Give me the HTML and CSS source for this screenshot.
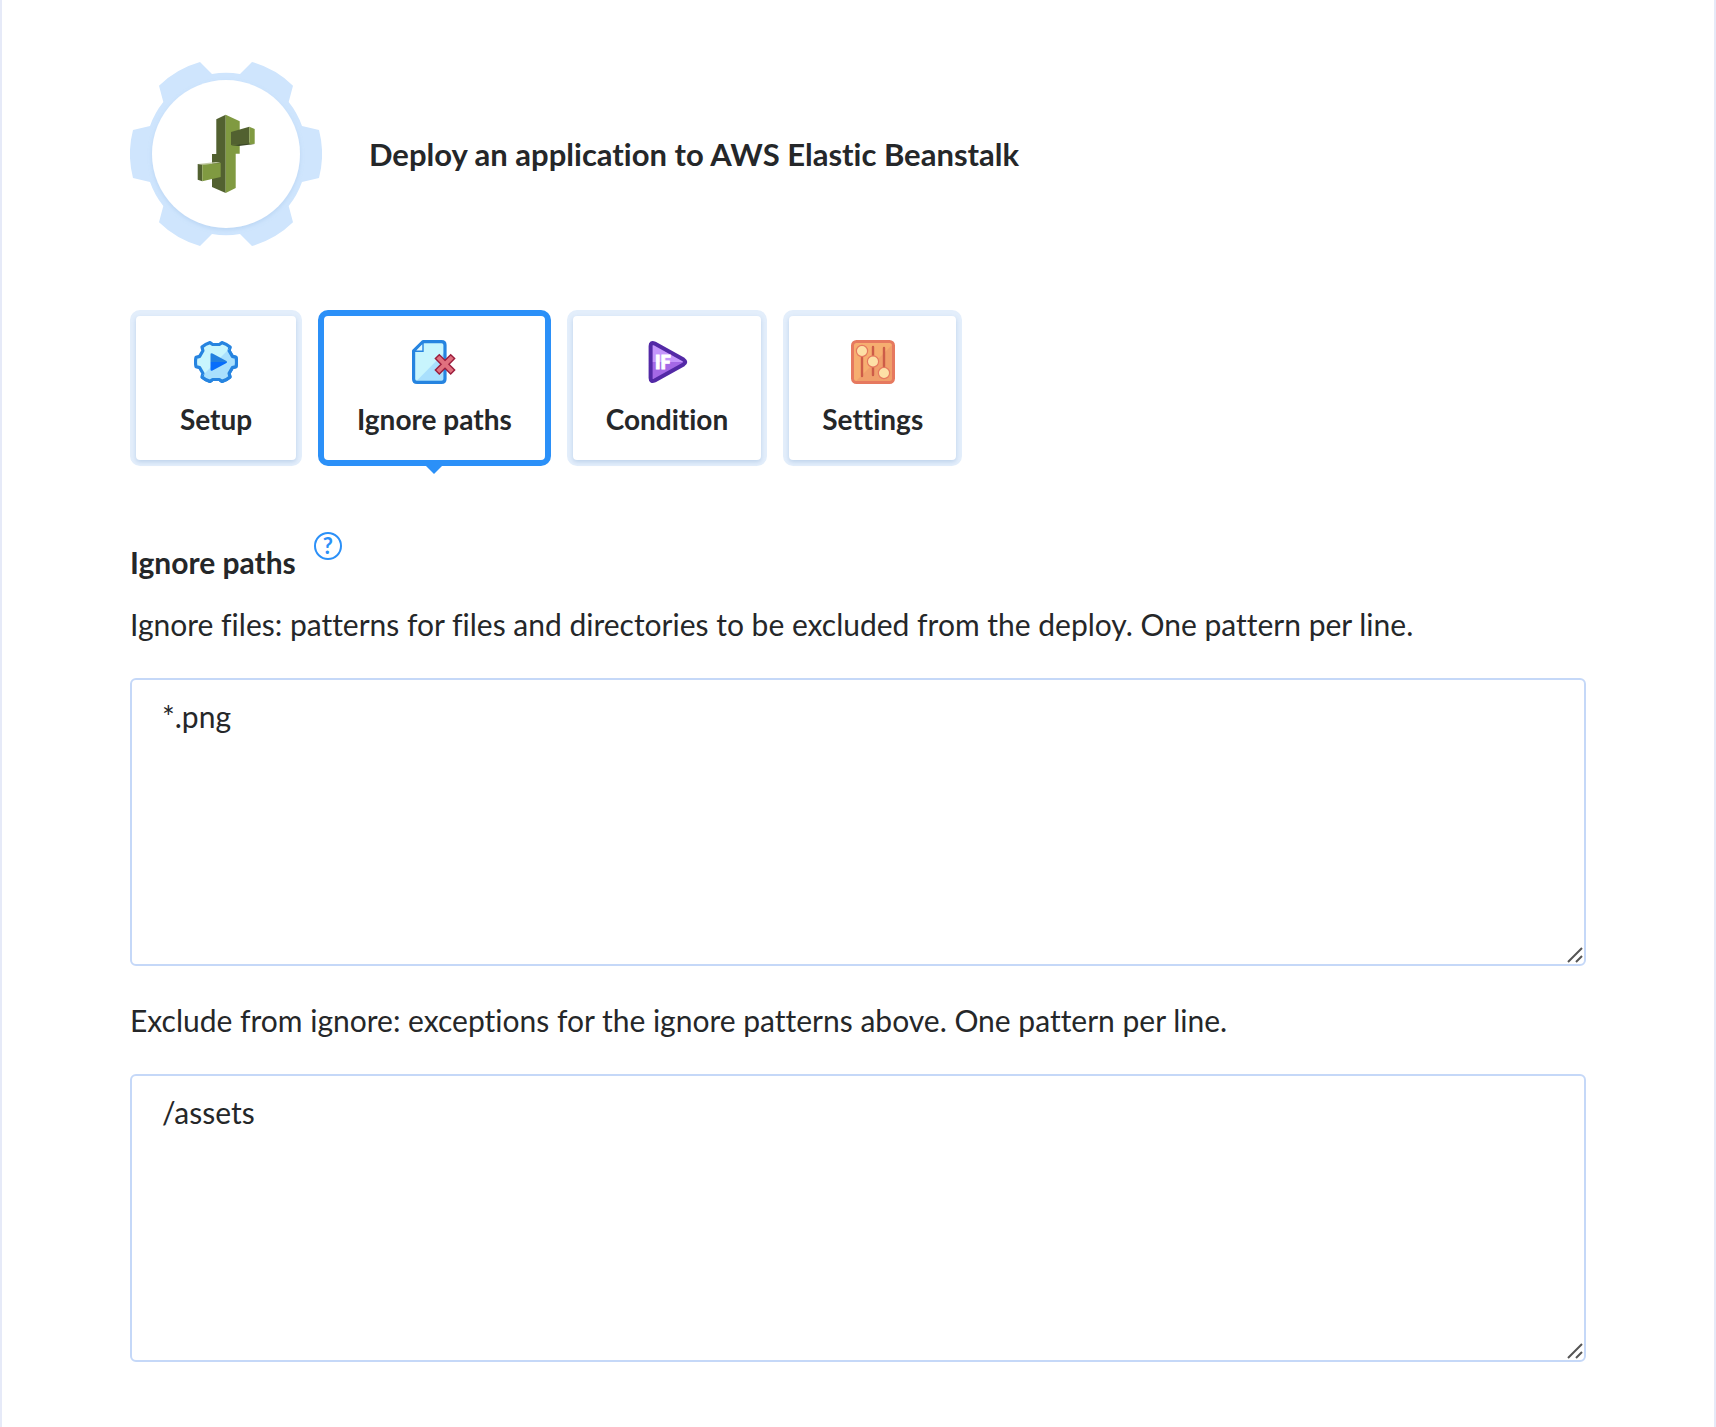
FILE: index.html
```html
<!DOCTYPE html>
<html lang="en">
<head>
<meta charset="utf-8">
<meta name="viewport" content="width=device-width, initial-scale=1">
<title>Deploy an application to AWS Elastic Beanstalk</title>
<link rel="stylesheet" href="styles.css">
</head>
<body>
<main class="panel">
  <header class="header">
    <svg class="header-icon" viewBox="0 0 192 184" aria-hidden="true">
      <defs>
        <filter id="disc-shadow" x="-10%" y="-10%" width="120%" height="120%">
          <feDropShadow dx="0" dy="2" stdDeviation="2" flood-color="#8cb4e0" flood-opacity=".3"/>
        </filter>
      </defs>
      <path fill="#cfe5fd" d="M70 0L82 12A81 81 0 0 1 110 12L122 0A96 96 0 0 1 163 23.700L158.700 40A81 81 0 0 1 172 64L189 68A96 96 0 0 1 189 116L172 120A81 81 0 0 1 158.700 144L163 160.300A96 96 0 0 1 122 184L110 172A81 81 0 0 1 82 172L70 184A96 96 0 0 1 29 160.300L33.300 144A81 81 0 0 1 20 120L3 116A96 96 0 0 1 3 68L20 64A81 81 0 0 1 33.300 40L29 23.700A96 96 0 0 1 70 0Z"/>
      <circle cx="96" cy="92" r="74" fill="#fff" filter="url(#disc-shadow)"/>
      <path fill="#526130" d="M95.700 52.700L86.300 57.300V92H82V125L95.700 131Z"/>
      <path fill="#809a41" d="M95.700 52.700L109.700 59.300V91.700H105.700V126L95.700 131Z"/>
      <path fill="#3c4929" d="M101 83.300L119.300 80.500L124.700 82L109 84Z"/>
      <path fill="#526130" d="M101 70L119.300 64.700V81.700L101 83Z"/>
      <path fill="#809a41" d="M119.300 64.700L124.700 67V81.700L119.300 82.500Z"/>
      <path fill="#c5cda9" d="M67.700 102L86 100L90.700 100.700L72.300 103Z"/>
      <path fill="#526130" d="M67.700 102L72.300 102.700V119.300L67.700 117.700Z"/>
      <path fill="#809a41" d="M72.300 102.700L90.700 101V115L72.300 119.300Z"/>
    </svg>
    <h1 class="title">Deploy an application to AWS Elastic Beanstalk</h1>
  </header>

  <nav class="tabs" aria-label="Action sections">
    <button class="tab" type="button">
      <svg class="tab-icon" viewBox="0 0 44 44" aria-hidden="true">
        <defs><clipPath id="gear-shade"><path d="M44 0V44H0Z"/></clipPath></defs>
        <path fill="#c8f5fd" stroke="#2684e0" stroke-width="3.200" stroke-linejoin="round" d="M38.400 16.400L42 17.400A20.500 20.500 0 0 1 42 26.600L38.400 27.600L35.100 33.300L36 37A20.500 20.500 0 0 1 28 41.400L25.300 39.500H18.700L16 41.400A20.500 20.500 0 0 1 8 37L8.900 33.300L5.600 27.600L2 26.600A20.500 20.500 0 0 1 2 17.400L5.600 16.400L8.900 10.700L8 7A20.500 20.500 0 0 1 16 2.600L18.700 4.500H25.300L28 2.600A20.500 20.500 0 0 1 36 7L35.100 10.700Z"/>
        <path clip-path="url(#gear-shade)" fill="#a9e0fd" stroke="#2684e0" stroke-width="3.200" stroke-linejoin="round" d="M38.400 16.400L42 17.400A20.500 20.500 0 0 1 42 26.600L38.400 27.600L35.100 33.300L36 37A20.500 20.500 0 0 1 28 41.400L25.300 39.500H18.700L16 41.400A20.500 20.500 0 0 1 8 37L8.900 33.300L5.600 27.600L2 26.600A20.500 20.500 0 0 1 2 17.400L5.600 16.400L8.900 10.700L8 7A20.500 20.500 0 0 1 16 2.600L18.700 4.500H25.300L28 2.600A20.500 20.500 0 0 1 36 7L35.100 10.700Z"/>
        <path fill="#2380df" d="M16.500 22V14.500Q16.500 12.500 18.500 13.500L32 20.800Q33 21.300 33 22Z"/>
        <path fill="#086dfb" d="M16.500 22V29.500Q16.500 31.500 18.500 30.500L32 23.200Q33 22.700 33 22Z"/>
      </svg>
      Setup
    </button>
    <button class="tab tab-active" type="button" aria-current="true">
      <svg class="tab-icon" viewBox="0 0 44 44" aria-hidden="true">
        <path fill="#c8f5fd" d="M11 1.600H29.500Q33 1.600 33 5V39Q33 42.400 29.500 42.400H5Q1.600 42.400 1.600 39V11Z"/>
        <path fill="#a9e0fd" d="M33 12V39Q33 42.400 29.500 42.400H3Z"/>
        <path fill="none" stroke="#2684e0" stroke-width="3.200" stroke-linejoin="round" d="M11 1.600H29.500Q33 1.600 33 5V39Q33 42.400 29.500 42.400H5Q1.600 42.400 1.600 39V11Z"/>
        <path fill="#e0f8ff" stroke="#2684e0" stroke-width="1.400" d="M11 2.500V11.300H2.500Z"/>
        <path fill="none" stroke="#9b1c3c" stroke-width="7" stroke-linecap="square" d="M27.300 18.600L38.700 30M38.700 18.600L27.300 30"/>
        <path fill="none" stroke="#e0707e" stroke-width="4.200" stroke-linecap="square" d="M27.300 18.600L38.700 30M38.700 18.600L27.300 30"/>
      </svg>
      Ignore paths
    </button>
    <button class="tab" type="button">
      <svg class="tab-icon" viewBox="0 0 44 44" aria-hidden="true">
        <path fill="#c596fb" d="M5 22V6Q6 1 11 4L38 19L41 22Z"/>
        <path fill="#a468e6" d="M5 22V38Q6 43 11 40L38 25L41 22Z"/>
        <path fill="none" stroke="#5329a6" stroke-width="4" stroke-linejoin="round" d="M5.600 6Q5.600 1.700 9.700 3.500L38.500 19.600Q42 22 38.500 24.400L9.700 40.500Q5.600 42.300 5.600 38Z"/>
        <text class="if-label" x="10" y="29">IF</text>
      </svg>
      Condition
    </button>
    <button class="tab" type="button">
      <svg class="tab-icon" viewBox="0 0 44 44" aria-hidden="true">
        <rect x="1.500" y="1.500" width="41" height="41" rx="4" fill="#f6ae70"/>
        <path fill="#f09f6b" d="M42 4V42H4Z"/>
        <rect x="1.500" y="1.500" width="41" height="41" rx="4" fill="none" stroke="#e6795f" stroke-width="3"/>
        <path stroke="#cd5c48" stroke-width="2.400" stroke-linecap="round" d="M11 11V36M22 7V35M33 8V33"/>
        <g fill="#fde0a6" stroke="#e6795f" stroke-width="1.200">
          <circle cx="11" cy="11" r="5.600"/><circle cx="22" cy="21.500" r="5.600"/><circle cx="33" cy="33" r="5.600"/>
        </g>
      </svg>
      Settings
    </button>
  </nav>

  <section class="section">
    <div class="section-head">
      <h2 class="section-title">Ignore paths</h2>
      <button class="help" type="button" aria-label="Help">?</button>
    </div>
    <div class="field">
      <label class="label" for="ignore">Ignore files: patterns for files and directories to be excluded from the deploy. One pattern per line.</label>
      <div class="area-wrap">
        <textarea class="area" id="ignore" spellcheck="false">*.png</textarea>
        <svg class="grip" viewBox="0 0 16 16" aria-hidden="true"><path d="M1 15L15 1M9 15L15 9"/></svg>
      </div>
    </div>
    <div class="field">
      <label class="label" for="exclude">Exclude from ignore: exceptions for the ignore patterns above. One pattern per line.</label>
      <div class="area-wrap">
        <textarea class="area" id="exclude" spellcheck="false">/assets</textarea>
        <svg class="grip" viewBox="0 0 16 16" aria-hidden="true"><path d="M1 15L15 1M9 15L15 9"/></svg>
      </div>
    </div>
  </section>
</main>
</body>
</html>
```
FILE: styles.css
```css
* {
  box-sizing: border-box;
}

body {
  margin: 0;
  background: #fff;
  color: #252729;
  font-family: Lato, "Liberation Sans", sans-serif;
  font-size: 30px;
  line-height: 40px;
  font-variant-ligatures: none;
}

.panel {
  min-height: 100vh;
  padding: 62px 128px;
  border: solid #e6eaf8;
  border-width: 0 2px;
}

.header {
  display: flex;
  align-items: center;
  gap: 47px;
}

.header-icon {
  flex: none;
  width: 192px;
  height: 184px;
}

.title {
  margin: 0;
  font-size: 31px;
  font-weight: 700;
}

.tabs {
  display: flex;
  flex-wrap: wrap;
  gap: 16px;
  margin-top: 64px;
}

.tab {
  position: relative;
  display: flex;
  flex-direction: column;
  align-items: center;
  gap: 15px;
  min-width: 172px;
  height: 156px;
  padding: 24px 33px;
  border: 6px solid #e3eefb;
  border-radius: 10px;
  background: #fff;
  color: inherit;
  font-family: inherit;
  font-size: 28px;
  font-weight: 700;
  line-height: 40px;
  font-variant-ligatures: inherit;
  cursor: pointer;
}

.tab::before {
  content: "";
  position: absolute;
  inset: 0;
  border-radius: 4px;
  box-shadow: 0 2px 4px rgba(80, 130, 190, .25);
  pointer-events: none;
}

.tab-active {
  border-color: #2b90f8;
}

.tab-active::before {
  box-shadow: none;
}

.tab-active::after {
  content: "";
  position: absolute;
  top: calc(100% + 6px);
  left: calc(50% - 8px);
  border: solid transparent;
  border-width: 8px 8px 0;
  border-top-color: #2b90f8;
}

.tab-icon {
  flex: none;
  width: 44px;
  height: 44px;
}

.if-label {
  fill: #fff;
  stroke: #fff;
  stroke-width: 1px;
  font: 900 18px Lato, sans-serif;
}

.section {
  margin-top: 66px;
}

.section-head {
  display: flex;
  align-items: flex-start;
  gap: 18px;
}

.section-title {
  margin: 10px 0 0;
  font-size: 30px;
  font-weight: 700;
}

.help {
  width: 28px;
  height: 28px;
  padding: 0;
  border: 2px solid #2b90f8;
  border-radius: 50%;
  background: none;
  color: #2b90f8;
  font: 700 22px/24px Lato, sans-serif;
  cursor: pointer;
}

.field {
  margin-top: 22px;
}

.field + .field {
  margin-top: 34px;
}

.label {
  display: block;
}

.area-wrap {
  position: relative;
  margin-top: 34px;
}

.area {
  display: block;
  width: 100%;
  height: 288px;
  padding: 16px 30px;
  border: 2px solid #c5d8f8;
  border-radius: 6px;
  outline: none;
  background: #fff;
  color: inherit;
  font: inherit;
  resize: none;
}

.grip {
  position: absolute;
  right: 3px;
  bottom: 3px;
  width: 16px;
  height: 16px;
  fill: none;
  stroke: #555;
  stroke-width: 2;
  pointer-events: none;
}
```
